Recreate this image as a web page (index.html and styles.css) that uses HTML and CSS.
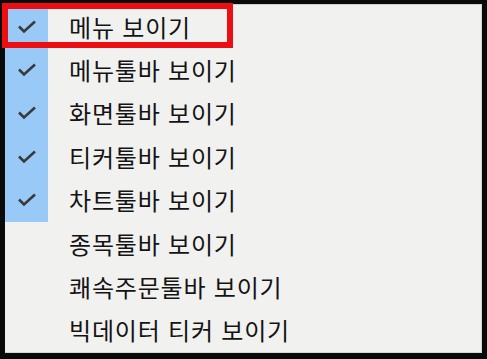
FILE: index.html
```html
<!DOCTYPE html>
<html lang="ko">
<head>
    <meta charset="UTF-8">
    <title>보기 메뉴</title>
    <link rel="stylesheet" href="styles.css">
</head>
<body>
    <div class="menu">
        <div class="menu-item checked">
            <span class="check"><svg width="20" height="14" viewBox="0 0 20 14"><path d="M2 6.5 L7 11.5 L18 1.5" /></svg></span>
            <span class="label">메뉴 보이기</span>
        </div>
        <div class="menu-item checked">
            <span class="check"><svg width="20" height="14" viewBox="0 0 20 14"><path d="M2 6.5 L7 11.5 L18 1.5" /></svg></span>
            <span class="label">메뉴툴바 보이기</span>
        </div>
        <div class="menu-item checked">
            <span class="check"><svg width="20" height="14" viewBox="0 0 20 14"><path d="M2 6.5 L7 11.5 L18 1.5" /></svg></span>
            <span class="label">화면툴바 보이기</span>
        </div>
        <div class="menu-item checked">
            <span class="check"><svg width="20" height="14" viewBox="0 0 20 14"><path d="M2 6.5 L7 11.5 L18 1.5" /></svg></span>
            <span class="label">티커툴바 보이기</span>
        </div>
        <div class="menu-item checked">
            <span class="check"><svg width="20" height="14" viewBox="0 0 20 14"><path d="M2 6.5 L7 11.5 L18 1.5" /></svg></span>
            <span class="label">차트툴바 보이기</span>
        </div>
        <div class="menu-item">
            <span class="check"></span>
            <span class="label">종목툴바 보이기</span>
        </div>
        <div class="menu-item">
            <span class="check"></span>
            <span class="label">쾌속주문툴바 보이기</span>
        </div>
        <div class="menu-item">
            <span class="check"></span>
            <span class="label">빅데이터 티커 보이기</span>
        </div>
        <div class="highlight"></div>
    </div>
</body>
</html>
```

FILE: styles.css
```css
* {
    margin: 0;
    padding: 0;
    box-sizing: border-box;
}

html, body {
    height: 100%;
}

body {
    background-color: #0a0a0a;
    padding: 4px 5px 6px 5px;
    font-family: 'Noto Sans CJK KR', 'Noto Sans', sans-serif;
    color: #141414;
}

.menu {
    position: relative;
    height: 100%;
    background-color: #f1f1f0;
    border-top: 1px solid #cfcfcf;
    border-right: 1px solid #d6d6d6;
    border-bottom: 1px solid #d6d6d6;
    display: flex;
    flex-direction: column;
}

.menu-item {
    flex: 1;
    display: flex;
    align-items: center;
}

.check {
    width: 43px;
    height: 100%;
    display: flex;
    align-items: center;
    justify-content: center;
}

.menu-item.checked .check {
    background-color: #99c9f7;
}

.check svg path {
    fill: none;
    stroke: #3a3a3a;
    stroke-width: 2.6;
}

.label {
    padding-left: 21px;
    font-size: 24px;
    letter-spacing: 0.8px;
    line-height: 1;
}

/* 선택 항목 강조 테두리 */
.highlight {
    position: absolute;
    left: -3px;
    top: -2px;
    width: 231px;
    height: 45px;
    border: 6px solid #ec0e12;
}
```
